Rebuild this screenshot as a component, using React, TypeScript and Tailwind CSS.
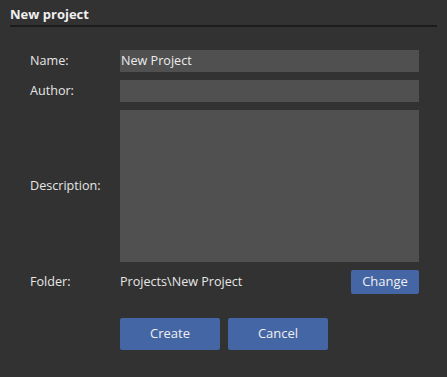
export default function App() {
  const font = { fontFamily: '"Open Sans", "Noto Sans", sans-serif' };
  return (
    <div className="flex h-[377px] w-[447px] flex-col bg-[#323232] text-[12.6px] text-[#e6e6e6]" style={font}>
      <div className="px-[10px] pt-[5px]">
        <div className="h-[19px] text-[13px] leading-[19px] font-bold text-[#f0f0f0]">New project</div>
        <div className="mt-[1px] h-[2px] bg-[#1c1c1c]" />
      </div>

      <div className="mt-[23px] grid grid-cols-[90px_299px] gap-y-[8px] pl-[30px]">
        <span className="flex items-center pt-[1px]">Name:</span>
        <div className="flex h-[22px] items-center bg-[#505050] px-[1px] pt-[1px] text-[#ececec]">New Project</div>

        <span className="flex items-center pt-[1px]">Author:</span>
        <div className="h-[22px] bg-[#505050]" />

        <span className="flex items-center pt-[1px]">Description:</span>
        <div className="h-[152px] bg-[#505050]" />

        <span className="flex items-center pt-[1px]">Folder:</span>
        <div className="flex items-center justify-between">
          <span className="pt-[1px]">Projects\New Project</span>
          <button type="button" className="h-[24px] w-[68px] rounded-[2px] bg-[#4466a4] text-[13px] text-[#f0f0f0]">
            Change
          </button>
        </div>

        <span />
        <div className="mt-[16px] flex gap-[8px]">
          <button type="button" className="h-[32px] w-[100px] rounded-[2px] bg-[#4466a4] text-[13px] text-[#f0f0f0]">
            Create
          </button>
          <button type="button" className="h-[32px] w-[100px] rounded-[2px] bg-[#4466a4] text-[13px] text-[#f0f0f0]">
            Cancel
          </button>
        </div>
      </div>
    </div>
  );
}
